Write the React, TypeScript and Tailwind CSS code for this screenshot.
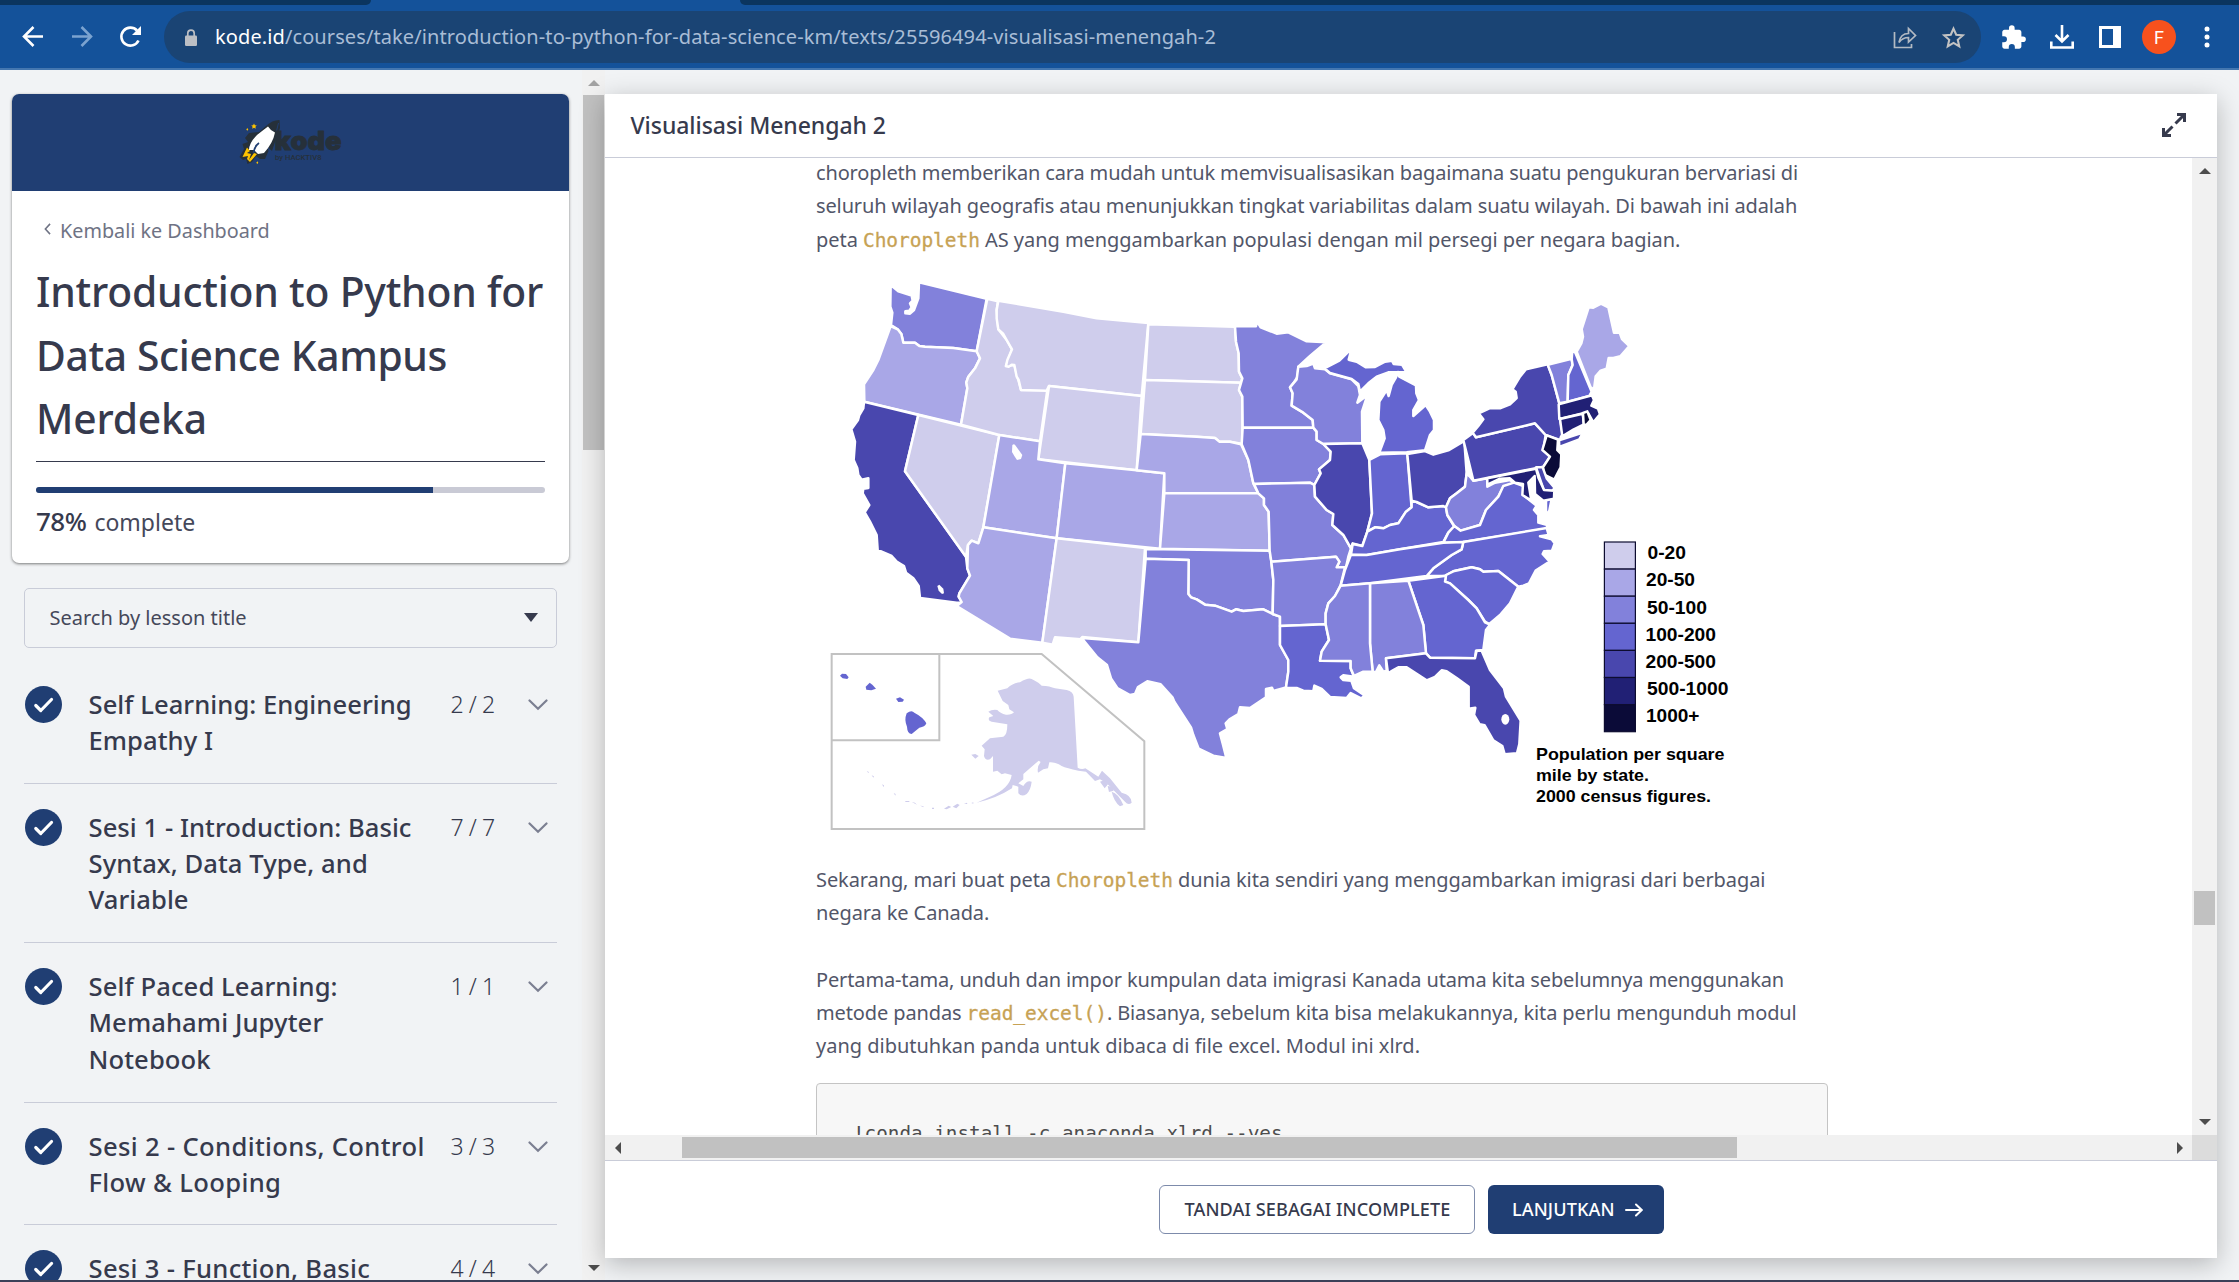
import type { ReactNode } from "react";

const C = {
  a: "#cfcdec",
  b: "#a9a7e7",
  c: "#8281db",
  d: "#6465d0",
  e: "#4947ae",
  f: "#212075",
  g: "#0b0b38",
};

type Shape = { fill: string; points: string };

const west: Shape[] = [
  { fill: C.c, points: "182,75 205,94 245,107 248,122 240,130 245,142 238,152 226,154 226,160 240,161 252,150 265,115 267,67 470,116 440,274 370,264 285,260 268,258 255,248 220,248 214,222 203,208 183,195 187,158 181,140" },
  { fill: C.b, points: "182,198 203,208 214,222 220,248 255,248 268,258 285,260 370,264 440,274 450,295 435,325 415,350 409,367 412,385 393,494 103,425 102,373 130,330 145,300" },
  { fill: C.e, points: "102,425 265,465 225,634 408,890 412,925 420,947 388,1000 386,1010 395,1026 380,1028 270,1014 266,978 250,955 228,938 222,918 200,905 185,888 143,870 140,825 120,785 104,757 118,735 98,700 100,686 115,684 115,655 95,659 85,645 82,625 71,600 75,545 64,508 84,480 88,465 100,445" },
  { fill: C.a, points: "265,465 508,525 460,802 445,850 425,842 414,855 408,890 225,634" },
  { fill: C.a, points: "472,116 504,124 500,150 505,208 530,240 546,268 528,318 553,315 573,390 652,390 630,544 508,525 393,494 412,385 409,367 415,350 435,325 450,295 440,274" },
  { fill: C.a, points: "505,122 700,155 800,175 955,189 935,408 657,378 650,392 573,390 566,360 560,350 553,315 545,314 536,320 528,318 532,300 546,268 530,240 520,222 505,208 500,175 500,150" },
  { fill: C.a, points: "657,378 935,408 920,631 625,598" },
  { fill: C.b, points: "508,525 630,544 625,598 706,610 680,835 460,802" },
  { fill: C.b, points: "706,610 920,631 1003,640 990,866 680,835" },
  { fill: C.b, points: "460,802 680,835 637,1148 540,1136 380,1038 395,1026 386,1010 388,1000 420,947 412,925 414,855 425,842 445,850" },
  { fill: C.a, points: "680,835 945,864 925,1147 757,1131 752,1138 675,1132 668,1154 637,1148" },
];

const central: Shape[] = [
  { fill: C.a, points: "55,193 315,200 318,245 326,280 327,335 337,355 333,368 45,360" },
  { fill: C.a, points: "45,360 333,368 327,390 337,410 338,552 300,545 268,545 255,534 200,530 32,522" },
  { fill: C.b, points: "32,522 200,530 255,534 268,545 300,545 333,553 355,600 370,670 385,700 103,700 103,640 20,631" },
  { fill: C.b, points: "103,700 385,700 402,715 402,735 416,755 419,872 90,866" },
  { fill: C.c, points: "47,867 419,872 424,905 430,960 428,1062 400,1048 340,1053 318,1048 305,1055 255,1037 225,1034 200,1018 183,1012 175,1002 176,900 47,896" },
  { fill: C.c, points: "47,896 176,900 175,1002 183,1012 200,1018 225,1034 255,1037 305,1055 318,1048 340,1053 400,1048 428,1062 450,1070 450,1155 475,1200 475,1235 468,1282 430,1293 426,1283 408,1287 408,1312 360,1344 330,1342 325,1362 300,1377 287,1390 292,1407 270,1420 278,1450 289,1494 250,1487 206,1466 190,1425 183,1402 133,1325 128,1313 92,1273 52,1264 24,1281 15,1302 0,1305 -38,1284 -57,1255 -69,1215 -98,1192 -145,1134 25,1147" },
  { fill: C.c, points: "315,199 378,199 381,184 392,202 440,221 475,217 530,244 589,247 540,288 505,320 503,350 490,370 480,382 488,400 485,437 520,458 548,480 550,503 338,503 337,410 327,390 337,355 327,335 326,280 318,245" },
  { fill: C.c, points: "338,503 550,503 560,515 560,540 580,552 602,575 600,600 567,628 572,640 553,675 540,668 375,672 370,670 355,600 335,553" },
  { fill: C.c, points: "372,672 540,668 553,675 555,710 590,750 610,762 607,795 640,825 663,865 655,890 648,922 620,922 628,905 618,890 424,905 419,872 416,755 402,735 402,715 385,700" },
  { fill: C.c, points: "424,905 618,890 628,905 620,922 645,922 632,975 615,1008 595,1030 587,1060 587,1093 450,1098 450,1070 428,1062 430,960" },
  { fill: C.d, points: "450,1098 587,1093 597,1140 575,1175 570,1202 662,1203 662,1225 672,1250 640,1246 632,1252 640,1260 664,1262 672,1285 702,1305 695,1316 662,1299 650,1314 600,1311 575,1287 553,1277 550,1294 520,1292 500,1284 468,1283 475,1235 475,1200 450,1155" },
  { fill: C.c, points: "505,320 530,318 550,311 555,325 585,328 600,340 665,358 685,378 690,405 682,428 712,406 696,455 697,550 580,552 560,540 560,515 550,503 548,480 520,458 485,437 488,400 480,382 500,358" },
  { fill: C.d, points: "583,325 628,302 665,266 656,299 680,305 708,322 735,321 765,305 786,302 791,312 816,314 830,337 775,337 740,350 715,370 690,395 685,372 665,357 600,339" },
  { fill: C.d, points: "804,336 808,350 858,376 859,400 867,420 850,450 850,468 887,435 900,455 912,480 912,510 900,525 885,571 830,577 748,578 764,535 760,510 745,480 748,425 770,390 776,408 785,375 798,352 803,340" },
  { fill: C.e, points: "580,552 697,550 718,600 726,760 712,815 697,858 668,850 663,865 640,825 607,795 610,762 590,750 555,710 553,675 572,640 567,628 600,600 602,575" },
  { fill: C.d, points: "718,600 750,583 832,580 843,722 845,742 828,755 805,790 780,795 760,805 735,802 712,815 726,760" },
];

const east: Shape[] = [
  { fill: C.d, points: "35,722 50,726 85,742 130,738 138,742 142,765 163,800 145,818 130,846 0,868 -100,885 -147,884 -142,852 -113,858 -98,815 -75,802 -50,805 -30,795 -5,790 18,755 35,742" },
  { fill: C.e, points: "22,582 75,573 100,584 145,571 193,543 200,640 195,680 170,700 150,715 138,742 130,738 85,742 50,726 35,722" },
  { fill: C.c, points: "200,640 208,648 220,662 262,655 262,680 285,668 330,660 345,672 310,680 295,710 258,750 240,795 182,812 163,798 142,765 138,742 150,715 170,700 195,680" },
  { fill: C.d, points: "342,668 370,678 370,705 410,737 402,750 415,765 415,788 442,795 440,806 190,846 130,848 145,818 163,798 182,812 240,795 258,750 295,710 310,678" },
  { fill: C.d, points: "438,717 455,717 448,752 438,766" },
  { fill: C.d, points: "190,846 440,804 446,825 420,829 455,838 464,850 456,872 432,874 428,882 449,905 407,932 387,970 370,977 355,980 295,933 250,935 240,928 215,922 160,934 138,947 80,948 100,925 155,885 185,868" },
  { fill: C.d, points: "-147,884 -100,885 0,868 130,848 190,846 185,868 155,885 100,925 80,948 -90,970 -178,977 -165,930" },
  { fill: C.d, points: "138,945 160,934 215,922 240,928 250,935 295,933 355,980 330,1030 300,1065 268,1092 255,1085 230,1045 205,1020 150,970 135,965" },
  { fill: C.d, points: "25,962 138,947 135,965 150,970 205,1020 230,1045 255,1087 270,1094 258,1110 250,1170 228,1172 225,1195 90,1193 78,1180 70,1095" },
  { fill: C.c, points: "-90,970 25,962 70,1095 78,1180 -42,1195 -40,1232 -50,1235 -62,1216 -72,1236 -82,1235 -90,1150" },
  { fill: C.c, points: "-178,977 -90,970 -90,1150 -82,1235 -110,1235 -138,1248 -148,1225 -148,1203 -240,1202 -235,1175 -213,1140 -223,1093 -223,1060 -215,1030 -195,1008" },
  { fill: C.e, points: "-42,1195 78,1180 90,1193 225,1195 230,1172 245,1172 270,1230 312,1285 318,1310 362,1382 358,1452 351,1480 314,1483 307,1458 280,1441 254,1396 239,1393 222,1365 226,1343 206,1346 206,1280 170,1254 140,1234 125,1231 105,1251 80,1261 20,1222 -5,1222 -20,1230 -36,1240" },
  { fill: C.e, points: "190,540 220,518 228,532 405,490 437,525 430,570 450,590 430,620 220,662 205,600" },
  { fill: C.e, points: "218,518 235,498 250,478 236,460 270,444 300,445 330,433 350,414 347,395 337,388 360,350 378,328 443,313 455,345 478,430 480,475 488,523 483,530 480,540 475,538 437,525 405,490 228,532" },
  { fill: C.e, points: "477,541 549,518 538,538 478,561" },
  { fill: C.c, points: "443,314 515,296 518,315 505,345 503,425 478,430 455,345" },
  { fill: C.d, points: "515,298 517,272 526,278 575,395 568,408 503,425 505,345 518,315" },
  { fill: C.b, points: "530,275 544,250 549,230 545,207 566,142 580,143 603,131 625,142 642,218 659,218 666,237 688,258 661,289 640,294 626,294 620,326 602,332 587,349 582,388 572,382" },
  { fill: C.f, points: "476,433 568,408 574,402 582,420 574,437 594,446 600,463 580,487 565,460 550,460 478,477" },
  { fill: C.f, points: "480,477 548,461 552,493 520,509 487,529" },
  { fill: C.g, points: "549,459 562,454 572,480 558,496 551,492" },
  { fill: C.g, points: "440,526 474,539 472,570 484,582 482,622 463,659 431,643 429,622 450,590 427,570" },
  { fill: C.e, points: "408,622 428,622 440,655 464,684 456,693 432,692" },
  { fill: C.f, points: "262,655 408,626 416,655 432,690 463,692 462,716 430,722 405,702 404,648 385,668 394,722 367,705 369,672 345,668 330,655 300,656 262,674" },
];

const States = ({ shapes }: { shapes: Shape[] }) => (
  <>
    {shapes.map((s) => (
      <polygon key={s.points} points={s.points} fill={s.fill} />
    ))}
  </>
);

const legend = [
  { fill: C.a, label: "0-20", x: 1647.5, w: 38.5 },
  { fill: C.b, label: "20-50", x: 1646, w: 49 },
  { fill: C.c, label: "50-100", x: 1647, w: 60 },
  { fill: C.d, label: "100-200", x: 1645.5, w: 70.5 },
  { fill: C.e, label: "200-500", x: 1645.5, w: 70.5 },
  { fill: C.f, label: "500-1000", x: 1647, w: 81.5 },
  { fill: C.g, label: "1000+", x: 1646, w: 53.5 },
];

const DensityMap = () => (
  <svg viewBox="816 256 1012 607" className="block h-[607px] w-[1012px] shrink-0">
    <g transform="translate(830 260) scale(0.33333)" stroke="#fff" strokeWidth="7.5" strokeLinejoin="round">
      <States shapes={west} />
      <g transform="translate(900 0)">
        <States shapes={central} />
      </g>
      <g transform="translate(1710 0)">
        <States shapes={east} />
      </g>
      <g fill="#fff" stroke="none">
        <path d="M547 555q6-6 10 2l20 28-4 12-12 3-8-12-7-12z" />
        <path d="M322 978l6-4 12 12 2 14-6 2-10-10z" />
        <ellipse cx="2026" cy="1378" rx="12" ry="16" />
      </g>
    </g>
    <g transform="translate(810 630) scale(0.33333)">
      <path d="M65 72H695L1003 334V597H65ZM388 72V331H65" fill="none" stroke="#c2c2c2" strokeWidth="6" />
      <g fill={C.d}>
        <path d="M90 137l6-6 12 1 8 10-4 5-14-2z" />
        <path d="M167 170l12-12 8 6 11 12-14 5-15-2z" />
        <path d="M258 206l12-4 12 7-4 6-13 1z" />
        <path d="M290 250Q305 238 313 248Q340 262 349 280Q345 291 328 293L305 312Q292 312 291 290Q282 270 290 250Z" />
      </g>
      <g fill={C.a}>
        <path d="M563 182L592 175Q610 158 630 157Q655 142 665 147Q690 160 695 167Q720 168 735 175L770 180Q790 185 791 200L803 413Q815 420 826 415L865 440L876 422L900 445L935 488Q965 495 965 518Q955 528 945 515L905 475L890 460L870 448L855 453L828 425L805 422Q770 415 755 408Q735 395 718 397L714 415L700 418L684 428Q680 410 692 396L686 392L640 432L640 448L625 460L640 468Q650 450 665 455Q662 480 650 492Q635 502 625 490L625 470L608 465L606 475Q560 505 500 518L540 500Q600 475 605 435L585 430L575 433L562 422L549 425V378L540 388Q525 392 522 378L524 358L515 347L540 325L580 320Q592 315 592 283L545 275Q532 272 538 262L550 258L535 245Q545 238 562 240Q570 250 588 254Q605 255 612 247L598 238L595 225L578 213Z" />
        <path d="M484 374l12-2 10 6-10 8z" />
        <path d="M870 455l12-4 12 12-10 12zM893 468l14 2 4 12-14 4zM905 485Q925 490 940 525L930 529Q912 515 905 485Z" />
        <path d="M402 536l14-9 8 4-14 7zM428 530l14-9 7 4-10 10zM462 522l9-4 1 4zM484 519l6-2v4zM305 516l10 2 6 6zM330 527l9 1 3 4zM366 533h6v4h-6zM286 513h12v3h-12zM251 489l6 3-1 5zM216 463l6 3-1 6zM185 436l7 3-2 4zM170 423l7 3-2 3z" />
      </g>
    </g>
    <g fontFamily="Liberation Sans, sans-serif" fontWeight="700" fill="#000">
      {legend.map((l, i) => (
        <g key={l.label}>
          <rect x="1604.4" y={542 + i * 27.1} width="31" height="27.1" fill={l.fill} stroke="#0d0c30" strokeWidth="1.2" />
          <text x={l.x} y={559.3 + i * 27.1} fontSize="18.6" textLength={l.w} lengthAdjust="spacingAndGlyphs">
            {l.label}
          </text>
        </g>
      ))}
      <text x="1536" y="760" fontSize="16.6" textLength="188.5" lengthAdjust="spacingAndGlyphs">Population per square</text>
      <text x="1536" y="781" fontSize="16.6" textLength="113" lengthAdjust="spacingAndGlyphs">mile by state.</text>
      <text x="1536" y="802.3" fontSize="16.6" textLength="175" lengthAdjust="spacingAndGlyphs">2000 census figures.</text>
    </g>
  </svg>
);

const Code = ({ children }: { children: ReactNode }) => (
  <code className="font-['DejaVu_Sans_Mono',monospace] text-[19.5px] leading-none font-normal tracking-[-0.05px] text-[#c7a254] [-webkit-text-stroke:0.3px_#c7a254]">{children}</code>
);

const Logo = () => (
  <svg viewBox="238 116 106 50" className="h-[50px] w-[106px]">
    <path d="M279.500 119Q272 119 266 125L259 131L249 132L245 137L248 141L242.500 143L244 148L239.500 156L243 159L246 158L247.500 163L252 161L256 155L260 158L265 158L268.500 150L267.500 146L272 150L275 141L280 127Z" fill="#26303a" />
    <path d="M276.500 130L278.500 122" stroke="#203e73" strokeWidth="1" fill="none" />
    <path d="M268 125.500Q270 129 275 131.500Q273 142 264 152L258 153L254 149L249 149Q249 142 257 134Q262 130 268 125.500Z" fill="#fff" />
    <path d="M259 142Q254.500 145 253.500 152" stroke="#203e73" strokeWidth="1.800" fill="none" />
    <path d="M247 146.500L250 150L247 152L251 153L249 159L254 152L257 153L250 161L247 158L248 155L242.500 156Z" fill="#fdc300" />
    <path d="M254 122.500l.9 1.700 1.900.2-1.400 1.300.4 2-1.800-1-1.800 1 .4-2-1.400-1.300 1.900-.2zM247.300 127l1 1.400-1 1.400-1-1.400zM257.300 160.300l1 1.400-1 1.400-1-1.400z" fill="#fdc300" />
    <text x="274.500" y="149" fontFamily="Inter, sans-serif" fontWeight="900" fontSize="26" textLength="67" lengthAdjust="spacingAndGlyphs" fill="#26303a" stroke="#26303a" strokeWidth=".8">kode</text>
    <text x="275" y="159.300" fontFamily="Roboto, sans-serif" fontWeight="500" fontSize="7.800" textLength="46.500" lengthAdjust="spacingAndGlyphs" fill="#26303a">by HACKTIV8</text>
  </svg>
);

const Tri = ({ d, c = "#4d4d4d" }: { d: "up" | "down" | "left" | "right"; c?: string }) => {
  const paths = { up: "M0 9 6 3 12 9Z", down: "M0 3 6 9 12 3Z", left: "M9 0 3 6 9 12Z", right: "M3 0 9 6 3 12Z" };
  return (
    <svg viewBox="0 0 12 12" className="size-3 shrink-0">
      <path d={paths[d]} fill={c} />
    </svg>
  );
};

const BrowserBar = () => (
  <div className="flex h-[70px] shrink-0 flex-col border-b-2 border-[#4477b0] bg-[#14529a]">
    <div className="flex h-[5px] shrink-0 justify-between">
      <div className="w-[371px] rounded-br-[5px] bg-[#0b355f]" />
      <div className="w-[1499px] rounded-bl-[5px] bg-[#0b355f]" />
    </div>
    <div className="mt-1.5 flex h-[52px] items-center">
      <svg viewBox="0 0 150 40" className="h-10 w-[150px] shrink-0" fill="none" strokeWidth="2.600">
        <path d="M43 19.500H25M33.500 10 24 19.500l9.500 9.500" stroke="#fff" />
        <path d="M72 19.500h18M81.500 10 91 19.500l-9.500 9.500" stroke="#7ba3d0" />
        <path d="M138.500 23.500A9 9 0 1 1 137 13.500" stroke="#fff" />
        <path d="M141 9v9h-9z" fill="#fff" />
      </svg>
      <div className="ml-[14px] flex h-[52px] w-[1817px] items-center rounded-full bg-[#1a4474] pl-[21px]">
        <svg viewBox="0 0 12 17" className="h-[17px] w-3 shrink-0">
          <path d="M2.800 7V4.300a3.200 3.200 0 0 1 6.400 0V7" fill="none" stroke="#bcbfc4" strokeWidth="1.700" />
          <rect y="6.500" width="12" height="10.500" rx="1.200" fill="#bcbfc4" />
        </svg>
        <span className="ml-[18px] text-[20px] leading-7 tracking-[0.1px] whitespace-nowrap text-[#a9bdd6]">
          <span className="text-white">kode.id</span>/courses/take/introduction-to-python-for-data-science-km/texts/25596494-visualisasi-menengah-2
        </span>
        <svg viewBox="0 0 24 24" className="ml-auto h-6 w-6 shrink-0" fill="none" stroke="#b3bac3" strokeWidth="1.700">
          <path d="M1.500 7v15.500h17V19" />
          <path d="M6 17.500C7 11 10.500 8.500 15.500 8.500V3.500L22.500 10.500 15.500 17v-4.500C11 12.500 8.500 14 6 17.500Z" />
        </svg>
        <svg viewBox="0 0 24 24" className="mr-[15px] ml-[24px] size-[25px] shrink-0" fill="none" stroke="#c3c3c3" strokeWidth="2">
          <path d="m12 3.500 2.600 5.900 6.300.6-4.800 4.200 1.400 6.300-5.500-3.300-5.500 3.300 1.400-6.300L3.100 10l6.300-.6z" />
        </svg>
      </div>
      <svg viewBox="0 0 24 24" className="ml-[19px] size-[27px] shrink-0" fill="#fff">
        <path d="M20.500 11H19V7c0-1.100-.9-2-2-2h-4V3.500a2.500 2.500 0 0 0-5 0V5H4c-1.100 0-2 .9-2 2v3.800h1.500a2.700 2.700 0 0 1 0 5.400H2V20c0 1.100.9 2 2 2h3.800v-1.500a2.700 2.700 0 0 1 5.400 0V22H17c1.100 0 2-.9 2-2v-4h1.500a2.500 2.500 0 0 0 0-5z" />
      </svg>
      <svg viewBox="0 0 24 24" className="ml-[23px] size-6 shrink-0" fill="none" stroke="#fff" strokeWidth="2.600">
        <path d="M12 0v16M5.500 10 12 16.500 18.500 10M1.300 16.500v6h21.400v-6" />
      </svg>
      <svg viewBox="0 0 22 22" className="ml-[25px] size-[22px] shrink-0" fill="#fff">
        <path fillRule="evenodd" d="M0 0h22v22H0zM3 3v16h11V3z" />
      </svg>
      <div className="ml-[21px] flex size-[34px] items-center justify-center rounded-full bg-[#f7511d] font-[Roboto,sans-serif] text-[18px] text-white">F</div>
      <div className="ml-[29px] flex flex-col gap-1">
        <i className="size-1 rounded-full bg-white ring-[0.5px] ring-white" />
        <i className="size-1 rounded-full bg-white ring-[0.5px] ring-white" />
        <i className="size-1 rounded-full bg-white ring-[0.5px] ring-white" />
      </div>
    </div>
  </div>
);

const lessons = [
  { lines: ["Self Learning: Engineering", "Empathy I"], count: "2 / 2", size: "h-[122.5px] tracking-[0.05px]" },
  { lines: ["Sesi 1 - Introduction: Basic", "Syntax, Data Type, and", "Variable"], count: "7 / 7", size: "h-[159.5px] tracking-[0.05px]" },
  { lines: ["Self Paced Learning:", "Memahami Jupyter", "Notebook"], count: "1 / 1", size: "h-[159.5px] tracking-[0.1px]" },
  { lines: ["Sesi 2 - Conditions, Control", "Flow & Looping"], count: "3 / 3", size: "h-[122.5px] tracking-[0.34px]" },
  { lines: ["Sesi 3 - Function, Basic"], count: "4 / 4", size: "h-[122.5px] tracking-[0.3px]" },
];

const Lesson = ({ lines, count, size }: { lines: string[]; count: string; size: string }) => (
  <div className={`flex shrink-0 items-start border-b border-[#c9ccd8] pt-[26px] ${size}`}>
    <svg viewBox="0 0 37 37" className="-mt-[1px] ml-[0.5px] size-[37px] shrink-0">
      <circle cx="18.500" cy="18.500" r="18.500" fill="#203e73" />
      <path d="m10.800 19.500 5 5L26.500 13.500" fill="none" stroke="#fff" strokeWidth="3.200" strokeLinecap="round" strokeLinejoin="round" />
    </svg>
    <div className="ml-[27px] w-[362px] text-[25.6px] leading-[36.3px] font-medium whitespace-nowrap text-[#363a4d]">
      {lines.map((l) => (
        <div key={l}>{l}</div>
      ))}
    </div>
    <div className="-mt-px w-[42px] text-[23px] leading-[36px] font-light tracking-[-0.4px] whitespace-nowrap text-[#363a4d]">{count}</div>
    <svg viewBox="0 0 20 12" className="mt-[12px] ml-[35px] h-3 w-5 shrink-0" fill="none" stroke="#7b7f91" strokeWidth="2.200" strokeLinecap="round">
      <path d="m1.500 1.500 8.500 8.300 8.500-8.300" />
    </svg>
  </div>
);

const Sidebar = () => (
  <div className="flex w-[605px] shrink-0">
    <div className="flex h-[1210px] w-[582px] shrink-0 flex-col overflow-hidden pt-6 pl-3">
      <div className="h-[469px] w-[557px] shrink-0 overflow-hidden rounded-[7px] bg-white shadow-[0_1px_3px_rgba(0,0,0,0.5)]">
        <div className="flex h-[97px] items-center justify-center bg-[#203e73] pb-[2px]">
          <Logo />
        </div>
        <div className="px-6 pt-[26px]">
          <div className="flex h-7 items-center pl-2 text-[19.8px] leading-7 text-[#6f7384]">
            <svg viewBox="0 0 8 14" className="mr-[9px] mb-1 h-3 w-[7px]" fill="none" stroke="#6f7384" strokeWidth="1.800">
              <path d="M7 1 1.500 7 7 13" />
            </svg>
            Kembali ke Dashboard
          </div>
          <h1 className="mt-[15px] text-[40.8px] leading-[63.5px] font-medium tracking-[-0.2px] whitespace-nowrap text-[#363a4d]">
            Introduction to Python for
            <br />
            <span className="tracking-[-0.35px]">Data Science Kampus</span>
            <br />
            Merdeka
          </h1>
          <div className="mt-[10px] h-px bg-[#363a4d]" />
          <div className="mt-[25px] flex h-1.5 overflow-hidden rounded-[3px] bg-[#c9cad5]">
            <div className="w-[78%] bg-[#203e73]" />
          </div>
          <div className="mt-[10px] text-[23px] leading-9 text-[#45485a]">
            <span className="mr-[2px] text-[26px] font-medium tracking-[-0.5px] text-[#363a4d]">78%</span> complete
          </div>
        </div>
      </div>
      <div className="mt-[25px] ml-3 flex h-[60px] w-[533px] shrink-0 items-center justify-between rounded-[5px] border border-[#c9ccd8] pr-[18px] pb-px pl-[24.5px] text-[20px] text-[#45485a]">
        Search by lesson title
        <svg viewBox="0 0 14 9" className="h-[9px] w-3.5 shrink-0">
          <path d="M0 0h14L7 9z" fill="#363a4d" />
        </svg>
      </div>
      <div className="mt-[13px] ml-3 flex w-[533px] flex-col">
        {lessons.map((l) => (
          <Lesson key={l.count} {...l} />
        ))}
      </div>
    </div>
    <div className="flex h-[1210px] w-[23px] flex-col items-center bg-[#f1f1f1] pt-[7px] pb-[6px]">
      <Tri d="up" c="#a3a3a3" />
      <div className="mt-[6px] h-[355px] w-[21px] bg-[#c1c1c1]" />
      <div className="flex-1" />
      <Tri d="down" />
    </div>
  </div>
);

const CoursePlayer = () => (
  <div className="relative mt-6 flex h-[1164px] w-[1612px] shrink-0 flex-col bg-white shadow-[0_6px_24px_rgba(0,0,0,0.25)]">
    <div className="flex h-16 shrink-0 items-center justify-between border-b border-[#c9ccd8] pr-[30px] pl-[25.5px]">
      <h2 className="text-[23px] font-medium tracking-[-0.05px] text-[#363a4d]">Visualisasi Menengah 2</h2>
      <svg viewBox="0 0 26 26" className="-mt-[2px] size-[26px]" fill="none" stroke="#363a4d" strokeWidth="3">
        <path d="M16 2.500h7.500V10M23 3 14.500 11.500M10 23.500H2.500V16M3 23 11.500 14.500" />
      </svg>
    </div>
    <div className="flex h-[977px] shrink-0">
      <div className="flex-1 overflow-hidden pl-[211px] text-[20px] leading-[33.3px] whitespace-nowrap text-[#525669]">
        <div className="-mt-[2.4px] h-[100.4px]">
          <div className="tracking-[-0.154px]">choropleth memberikan cara mudah untuk memvisualisasikan bagaimana suatu pengukuran bervariasi di</div>
          <div className="pt-[0.4px] tracking-[-0.13px]">seluruh wilayah geografis atau menunjukkan tingkat variabilitas dalam suatu wilayah. Di bawah ini adalah</div>
          <div className="pt-[0.4px] tracking-[-0.05px]">
            peta <Code>Choropleth</Code> AS yang menggambarkan populasi dengan mil persegi per negara bagian.
          </div>
        </div>
        <DensityMap />
        <div className="h-[100px] tracking-[-0.1px]">
          <div>
            Sekarang, mari buat peta <Code>Choropleth</Code> dunia kita sendiri yang menggambarkan imigrasi dari berbagai
          </div>
          <div>negara ke Canada.</div>
        </div>
        <div className="h-[120px] tracking-[-0.1px]">
          <div className="tracking-[-0.14px]">Pertama-tama, unduh dan impor kumpulan data imigrasi Kanada utama kita sebelumnya menggunakan</div>
          <div className="tracking-[-0.12px]">
            metode pandas <Code>read_excel()</Code>. Biasanya, sebelum kita bisa melakukannya, kita perlu mengunduh modul
          </div>
          <div className="-mt-[0.6px] tracking-[-0.015px]">yang dibutuhkan panda untuk dibaca di file excel. Modul ini xlrd.</div>
        </div>
        <pre className="h-[120px] w-[1012px] rounded-[4px] border border-[#c4c4c4] bg-[#f7f7f7] pt-[33px] pl-[36px] font-['DejaVu_Sans_Mono',monospace] text-[19.3px] text-[#4d4d4d]">
          !conda install -c anaconda xlrd --yes
        </pre>
      </div>
      <div className="flex w-[25px] shrink-0 flex-col items-center bg-[#f1f1f1] pt-[7px] pb-[7px]">
        <Tri d="up" />
        <div className="mt-[714px] h-[34px] w-[21px] bg-[#c1c1c1]" />
        <div className="flex-1" />
        <Tri d="down" />
      </div>
    </div>
    <div className="flex h-[26px] shrink-0 border-b border-[#c9ccd8] bg-[#f1f1f1]">
      <div className="flex flex-1 items-center pr-[6px] pl-[7px]">
        <Tri d="left" />
        <div className="ml-[58px] h-[21px] w-[1055px] bg-[#c1c1c1]" />
        <div className="flex-1" />
        <Tri d="right" />
      </div>
      <div className="w-[25px] bg-[#dcdcdc]" />
    </div>
    <div className="flex gap-[13px] pt-6 pl-[554px] text-[18.1px] font-medium whitespace-nowrap">
      <button className="h-[49px] w-[316px] rounded-[6px] border border-[#7d8bab] pl-px tracking-[0.1px] text-[#363a4d]">TANDAI SEBAGAI INCOMPLETE</button>
      <button className="flex h-[49px] w-[176px] items-center rounded-[6px] bg-[#203e73] pl-6 tracking-[0.1px] text-white">
        LANJUTKAN
        <svg viewBox="0 0 18 14" className="ml-[10px] h-3.5 w-[18px]" fill="none" stroke="#fff" strokeWidth="2" strokeLinecap="round">
          <path d="M1 7h15.500M11 1.500 16.700 7 11 12.500" />
        </svg>
      </button>
    </div>
  </div>
);

export default function App() {
  return (
    <div className="flex h-[1282px] w-[2239px] flex-col overflow-hidden border-b-2 border-[#3b4058] bg-[#f1f3f5] font-['Noto_Sans',sans-serif]">
      <BrowserBar />
      <div className="flex min-h-0 flex-1 overflow-hidden">
        <Sidebar />
        <CoursePlayer />
      </div>
    </div>
  );
}
